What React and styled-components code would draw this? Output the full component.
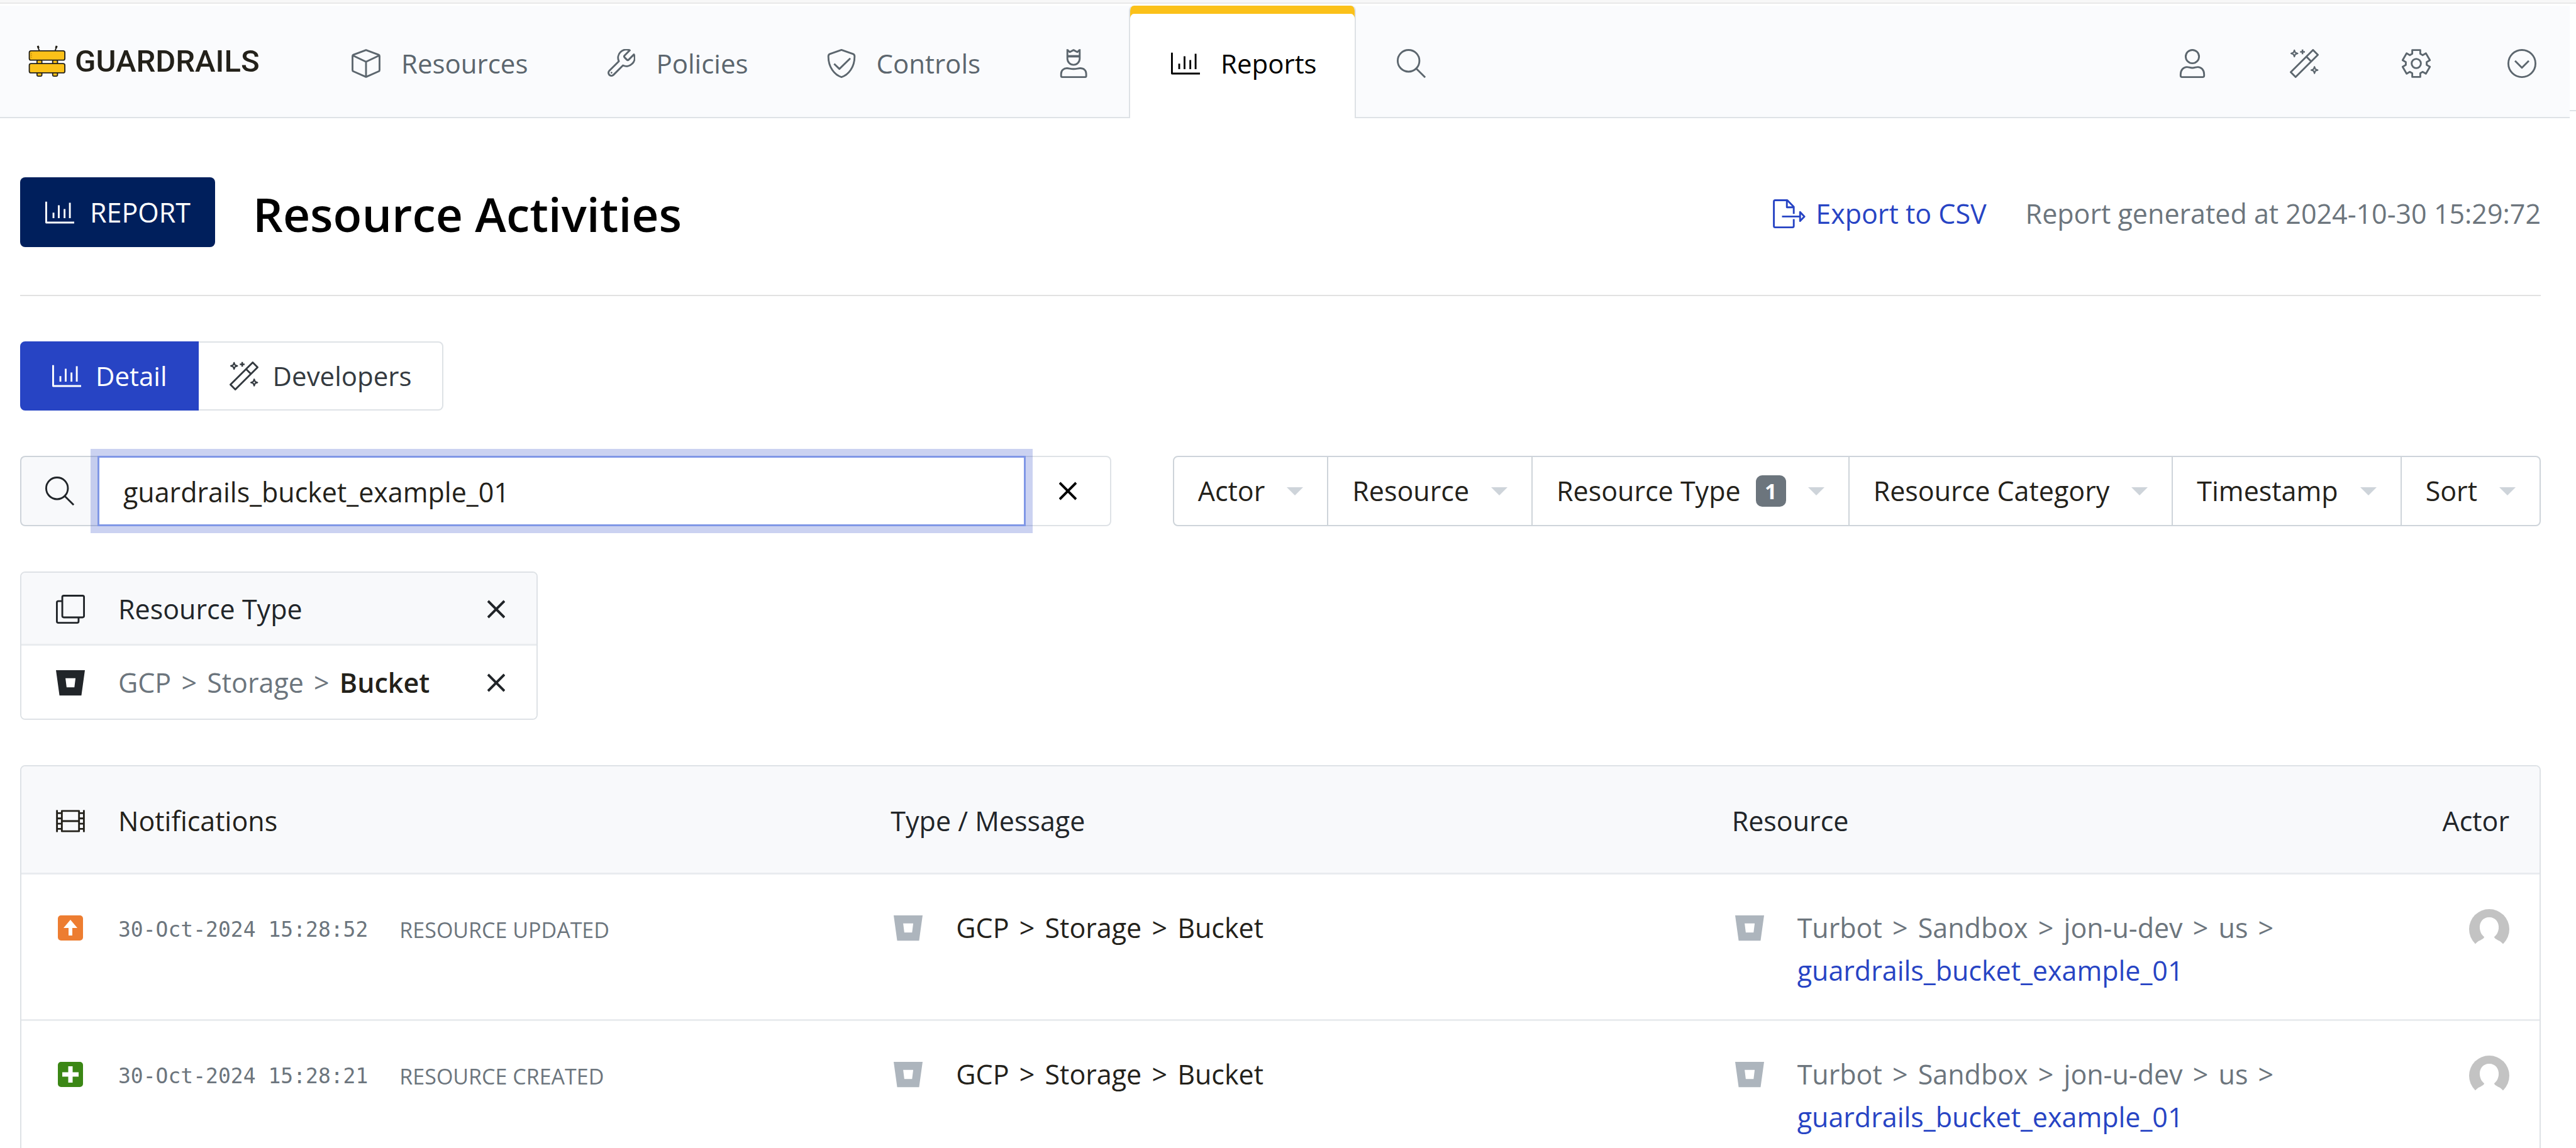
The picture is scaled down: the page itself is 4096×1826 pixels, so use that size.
import React, { useState } from "react";
import styled, { createGlobalStyle } from "styled-components";

const color = {
  ink: "#212529",
  dark: "#23211a",
  muted: "#6c757d",
  nav: "#5c666e",
  line: "#dee2e6",
  control: "#ced4da",
  panel: "#f8f9fb",
  blue: "#2744c4",
  navy: "#001f5c",
  yellow: "#fbc119",
};

const GlobalStyle = createGlobalStyle`
  *, *::before, *::after { box-sizing: border-box; }
  body {
    margin: 0;
    background: #fff;
    color: ${color.ink};
    font-family: "Open Sans", "Noto Sans", sans-serif;
    font-size: 43px;
    line-height: 68px;
  }
  button, input { font: inherit; color: inherit; margin: 0; }
  button { background: none; border: 0; padding: 0; cursor: pointer; white-space: nowrap; }
  a { color: inherit; text-decoration: none; }
  h1, p, ul { margin: 0; padding: 0; }
`;

/* ---------- icons ---------- */

const IconBox = styled.span`
  flex: none;
  display: inline-flex;
  align-items: center;
  justify-content: center;
  width: 56px;
  height: 68px;
`;

const Line = styled.svg`
  display: block;
  width: ${(p) => p.$w || 46}px;
  height: 46px;
  fill: none;
  stroke: currentColor;
  stroke-width: ${(p) => p.$stroke ?? 32};
  stroke-linejoin: round;
`;

const Glyph = ({ children, box = "0 0 512 512", ...rest }) => (
  <Line viewBox={box} aria-hidden="true" {...rest}>
    {children}
  </Line>
);

const CubeIcon = () => (
  <Glyph>
    <path d="M256 18 480 102Q495 108 495 126V372Q495 388 480 395L256 494 32 395Q17 388 17 372V126Q17 108 32 102ZM22 114 256 226 490 114M256 226V494" />
  </Glyph>
);
const WrenchIcon = () => (
  <Glyph box="1.4 1.6 21 21" $stroke={1.35}>
    <path d="M14.7 6.3a1 1 0 0 0 0 1.4l1.6 1.6a1 1 0 0 0 1.4 0l3.77-3.77a6 6 0 0 1-7.94 7.94l-6.91 6.91a2.12 2.12 0 0 1-3-3l6.91-6.91a6 6 0 0 1 7.94-7.94l-3.76 3.76z" />
    <circle cx="5.2" cy="18.8" r=".35" fill="currentColor" strokeWidth=".6" />
  </Glyph>
);
const ShieldIcon = () => (
  <Glyph>
    <path d="M256 16 462 88Q488 98 488 130C488 320 380 460 256 496C132 460 24 320 24 130Q24 98 50 88ZM126 262 219 352 412 164" />
  </Glyph>
);
const RulerIcon = () => (
  <Glyph>
    <path d="M147 4V170A109 109 0 0 0 365 170V4M147 16 190 54 256 18 322 54 365 16" />
    <path d="M147 128H365" strokeWidth="42" />
    <path d="M36 440C36 380 80 340 140 340C180 340 200 354 256 354C312 354 332 340 372 340C440 340 480 380 480 440V476Q480 496 460 496H56Q36 496 36 476Z" />
  </Glyph>
);
const ChartIcon = () => (
  <Glyph>
    <path d="M16 64V434H512M145 258V356M239 128V356M341 194V356M435 84V356" />
  </Glyph>
);
const SearchIcon = () => (
  <Glyph>
    <circle cx="208" cy="208" r="192" />
    <path d="M344 344 502 502" />
  </Glyph>
);
const UserIcon = () => (
  <Glyph>
    <circle cx="256" cy="134" r="118" />
    <path d="M48 448C48 370 100 318 160 318C190 318 215 334 256 334C297 334 322 318 352 318C412 318 464 370 464 448V470Q464 496 438 496H74Q48 496 48 470Z" />
  </Glyph>
);
const WandIcon = () => (
  <Glyph>
    <path d="M410 16 496 102 102 496 16 410ZM292 134 378 220" />
    <path strokeWidth="24" d="M80 20 96 62 138 78 96 94 80 136 64 94 22 78 64 62ZM436 314 452 356 494 372 452 388 436 430 420 388 378 372 420 356Z" />
    <path strokeWidth="28" d="M224 8V92M182 50H266" />
  </Glyph>
);

const gearPoints = Array.from({ length: 6 }, (_, tooth) =>
  [[-71, -172], [-71, -238], [71, -238], [71, -172]].map(([x, y]) => {
    const a = (tooth * Math.PI) / 3;
    const px = 256 + x * Math.cos(a) - y * Math.sin(a);
    const py = 256 + x * Math.sin(a) + y * Math.cos(a);
    return `${px.toFixed(1)},${py.toFixed(1)}`;
  }).join(" ")
).join(" ");

const GearIcon = () => (
  <Glyph>
    <polygon points={gearPoints} />
    <circle cx="256" cy="256" r="82" />
  </Glyph>
);
const DownCircleIcon = () => (
  <Glyph>
    <circle cx="256" cy="256" r="240" />
    <path d="M134 208 256 330 378 208" />
  </Glyph>
);
const ExportIcon = () => (
  <Glyph box="0 0 576 512" $w={52}>
    <path d="M368 260V134L254 16H40Q16 16 16 40V472Q16 496 40 496H344Q368 496 368 472V350M246 16V142H368M160 305H470M480 225 556 305 480 385Z" />
  </Glyph>
);
const CloneIcon = () => (
  <Glyph>
    <rect x="112" y="16" width="384" height="384" rx="26" />
    <path d="M112 112H42Q16 112 16 138V470Q16 496 42 496H374Q400 496 400 470V400" />
  </Glyph>
);
const FilmIcon = () => (
  <Glyph>
    <path d="M104 76H408V436H104ZM104 256H408M18 60V452M494 60V452M18 116H104M18 208H104M18 302H104M18 394H104M408 116H494M408 208H494M408 302H494M408 394H494" />
  </Glyph>
);
const BucketIcon = () => (
  <Glyph $stroke={0}>
    <path fill="currentColor" fillRule="evenodd" d="M0 32H512L450 480H62ZM168 176 188 336H326L346 176Z" />
  </Glyph>
);
const CloseIcon = () => (
  <Line viewBox="0 0 28 46" $w={28} $stroke={4} aria-hidden="true">
    <path d="M1 10 27 36M27 10 1 36" />
  </Line>
);
const UpdatedIcon = () => (
  <Line viewBox="0 0 46 46" $stroke={6} aria-hidden="true">
    <rect x="3" y="3" width="40" height="40" rx="5" fill="#ed7d31" stroke="none" />
    <path d="M23 17V35" stroke="#fff" />
    <path d="M23 10 34 23H12Z" fill="#fff" stroke="none" />
  </Line>
);
const CreatedIcon = () => (
  <Line viewBox="0 0 46 46" $stroke={7} aria-hidden="true">
    <rect x="3" y="3" width="40" height="40" rx="5" fill="#3b8715" stroke="none" />
    <path d="M23 10V36M10 23H36" stroke="#fff" />
  </Line>
);

const AvatarSvg = styled.svg`
  display: block;
  width: 64px;
  height: 68px;
  margin-left: auto;
`;
const Avatar = () => (
  <AvatarSvg viewBox="0 0 64 68" role="img" aria-label="Actor">
    <circle cx="32" cy="32" r="32" fill="#c3c3c3" />
    <path
      fill="#fff"
      d="M32 13C22 13 16 21 17 31C18 38 21 42 24 44C24 49 11 50 9 58V68H55V58C53 50 40 49 40 44C43 42 46 38 47 31C48 21 42 13 32 13Z"
    />
  </AvatarSvg>
);

const LogoMark = styled.svg`
  display: block;
  width: 60px;
  height: 51px;
`;
const Logo = () => (
  <LogoMark viewBox="25 52 193 166" aria-hidden="true">
    <g stroke={color.dark} strokeWidth="6">
      <path fill="none" d="M73 55 76 68 81 80M170 55 167 68 163 80" />
      <path fill="none" strokeWidth="10" d="M73 55 77 67M171 55 167 67" />
      <rect x="69" y="128" width="25" height="84" rx="5" fill={color.yellow} />
      <rect x="150" y="128" width="25" height="84" rx="5" fill={color.yellow} />
      <rect x="29" y="81" width="184" height="48" rx="9" fill={color.yellow} />
      <rect x="29" y="147" width="184" height="48" rx="9" fill={color.yellow} />
    </g>
    <path d="M40 92V118" stroke="#b98a10" strokeWidth="4" strokeDasharray="6 4" />
  </LogoMark>
);

/* ---------- top bar ---------- */

const Shell = styled.div`
  display: flex;
  flex-direction: column;
  height: 100vh;
  overflow: hidden;
`;
const WindowEdge = styled.div`
  flex: none;
  height: 9px;
  background: #fff;
  border-top: 4px solid #f7f7f7;
  box-shadow: inset 0 2px #e8e8e8;
`;
const TopRow = styled.div`
  flex: none;
  display: flex;
`;
const NavBar = styled.header`
  flex: 1;
  display: flex;
  height: 179px;
  background: #fafbfd;
  box-shadow: inset 0 -2px ${color.line};
`;
const BarEnd = styled.div`
  width: 10px;
  height: 168px;
  border-bottom: 2px solid ${color.line};
`;
const Brand = styled.a`
  flex: none;
  display: flex;
  align-items: center;
  gap: 14px;
  width: 494px;
  padding: 0 0 2px 45px;
  font: 500 49px/68px Roboto, sans-serif;
  color: ${color.dark};
`;
const NavGroup = styled.nav`
  display: flex;
  gap: ${(p) => (p.$end ? 2 : 0)}px;
  margin-left: ${(p) => (p.$end ? "auto" : "0")};
  font-size: 42px;
`;
const NavLink = styled.a`
  display: flex;
  align-items: center;
  gap: 28px;
  padding: 4px 60px 0 60px;
  color: ${(p) => (p.$active ? "#000" : color.nav)};
  background: ${(p) => (p.$active ? "#fff" : "none")};
  border: solid ${color.line};
  border-width: ${(p) => (p.$active ? "0 2px" : "0")};
  border-radius: 8px 8px 0 0;
  box-shadow: ${(p) => (p.$active ? `inset 0 13px ${color.yellow}` : "none")};
`;
const MenuButton = styled.button`
  display: flex;
  align-items: center;
  padding: 4px 48px 0 50px;
  color: ${color.nav};
`;

/* ---------- page ---------- */

const Main = styled.main`
  flex: 1;
  display: flex;
  flex-direction: column;
  gap: 72px;
  padding: 94px 56px 0 32px;
  overflow-y: auto;
  scrollbar-width: none;
`;
const PageHeader = styled.div`
  flex: none;
  display: flex;
  align-items: center;
  padding-bottom: 76px;
  border-bottom: 2px solid #e2e2e2;
`;
const ReportTag = styled.span`
  display: flex;
  align-items: center;
  gap: 20px;
  height: 111px;
  padding: 0 39px 0 35px;
  border-radius: 8px;
  background: ${color.navy};
  color: #fff;
`;
const Title = styled.h1`
  margin-left: 60px;
  padding-top: 4px;
  font-size: 75px;
  font-weight: 600;
  line-height: 104px;
  color: #000;
`;
const HeaderMeta = styled.div`
  display: flex;
  align-items: center;
  gap: 62px;
  margin-left: auto;
  padding-top: 4px;
  color: ${color.muted};
`;
const ExportLink = styled.a`
  display: flex;
  align-items: center;
  gap: 14px;
  color: ${color.blue};
`;
const TabGroup = styled.div`
  flex: none;
  display: flex;
`;
const TabButton = styled.button`
  display: flex;
  align-items: center;
  gap: 18px;
  height: 110px;
  padding: 0 48px 0 44px;
  border: 2px solid ${(p) => (p.$active ? color.blue : color.line)};
  background: ${(p) => (p.$active ? color.blue : "#fff")};
  color: ${(p) => (p.$active ? "#fff" : "#343a40")};
  font-size: 42px;
  &:first-child { border-radius: 8px 0 0 8px; }
  &:last-child { border-radius: 0 8px 8px 0; border-left: 0; padding-left: 44px; }
`;
const Toolbar = styled.div`
  flex: none;
  display: flex;
  justify-content: space-between;
  gap: 98px;
`;
const SearchGroup = styled.div`
  flex: 1;
  display: flex;
  height: 112px;
`;
const SearchLabel = styled.label`
  display: flex;
  align-items: center;
  padding: 0 32px 0 33px;
  border: 2px solid ${color.control};
  border-right: 0;
  border-radius: 8px 0 0 8px;
  background: ${color.panel};
`;
const SearchInput = styled.input`
  flex: 1;
  min-width: 0;
  position: relative;
  z-index: 1;
  padding: 4px 38px 0;
  border: 3px solid #8097e6;
  border-radius: 0;
  background: #fff;
  color: ${color.dark};
  outline: 0;
  box-shadow: 0 0 0 11px rgba(39, 68, 196, 0.24);
`;
const ClearButton = styled.button`
  display: flex;
  align-items: center;
  justify-content: center;
  width: 136px;
  border: 2px solid ${color.line};
  border-left: 0;
  border-radius: 0 8px 8px 0;
  color: #000;
`;
const FilterGroup = styled.div`
  display: flex;
  height: 112px;
`;
const FilterButton = styled.button`
  display: flex;
  align-items: center;
  gap: 35px;
  padding: 0 38px;
  border: solid ${color.control};
  border-width: 2px 2px 2px 0;
  color: ${color.dark};
  &:first-child { border-left-width: 2px; border-radius: 8px 0 0 8px; }
  &:last-child { border-radius: 0 8px 8px 0; }
`;
const FilterText = styled.span`
  display: flex;
  align-items: center;
  gap: 24px;
`;
const Count = styled.span`
  width: 48px;
  border-radius: 10px;
  background: ${color.muted};
  color: #fff;
  font-size: 34px;
  font-weight: 700;
  line-height: 50px;
  text-align: center;
`;
const Caret = styled.span`
  border: solid transparent;
  border-width: 13px 13px 0;
  border-top-color: ${color.control};
`;
const FilterCard = styled.ul`
  flex: none;
  width: 823px;
  border: 2px solid ${color.line};
  border-radius: 8px;
  list-style: none;
  overflow: hidden;
`;
const FilterRow = styled.li`
  display: flex;
  align-items: center;
  gap: 48px;
  height: 116px;
  padding: 2px 50px 0;
  background: ${(p) => (p.$head ? color.panel : "#fff")};
  border-bottom: ${(p) => (p.$head ? `3px solid #e9ecef` : "0")};
`;
const RemoveButton = styled.button`
  margin-left: auto;
`;
const Trail = styled.span`
  color: ${color.muted};
`;
const Separator = styled.span`
  margin: 0 5px;
`;
const Strong = styled.strong`
  font-weight: 600;
  color: ${color.dark};
`;

const TableFrame = styled.div`
  flex: none;
  border: 2px solid ${color.line};
  border-radius: 8px 8px 0 0;
  overflow: hidden;
`;
const Table = styled.table`
  width: 100%;
  table-layout: fixed;
  border-collapse: separate;
  border-spacing: 0;
`;
const Column = styled.col`
  width: ${(p) => p.$width};
`;
const HeadCell = styled.th`
  height: 172px;
  padding: 4px 48px 0 37px;
  background: ${color.panel};
  border-bottom: 3px solid #e9ecef;
  font-weight: 400;
  text-align: ${(p) => (p.$end ? "right" : "left")};
  &:first-child { padding-left: 50px; }
`;
const Cell = styled.td`
  height: 233px;
  padding: 51px 48px 0 37px;
  border-bottom: 3px solid #e9ecef;
  vertical-align: top;
  &:first-child { padding-left: 50px; }
`;
const Entry = styled.div`
  display: flex;
  align-items: flex-start;
  gap: 48px;
  color: ${(p) => (p.$muted ? color.muted : color.dark)};
`;
const IconTone = styled.span`
  color: #adb5bd;
`;
const Event = styled.div`
  display: flex;
  gap: 50px;
  line-height: 74px;
  color: ${color.muted};
`;
const Time = styled.time`
  font-family: "DejaVu Sans Mono", monospace;
  font-size: 33px;
`;
const EventName = styled.span`
  font-size: 34px;
`;
const ResourceLink = styled.a`
  display: block;
  color: ${color.blue};
`;
const AvatarSlot = styled.div`
  padding-top: 4px;
`;

const navItems = [
  { label: "Resources", Icon: CubeIcon },
  { label: "Policies", Icon: WrenchIcon },
  { label: "Controls", Icon: ShieldIcon },
  { name: "Administration", Icon: RulerIcon },
  { label: "Reports", Icon: ChartIcon, active: true },
  { name: "Search", Icon: SearchIcon },
];
const accountItems = [
  { name: "Profile", Icon: UserIcon },
  { name: "Developers", Icon: WandIcon },
  { name: "Settings", Icon: GearIcon },
];
const filters = [
  { label: "Actor" },
  { label: "Resource" },
  { label: "Resource Type", count: 1 },
  { label: "Resource Category" },
  { label: "Timestamp" },
  { label: "Sort" },
];
const resourcePath = ["Turbot", "Sandbox", "jon-u-dev", "us"];
const activities = [
  { time: "30-Oct-2024 15:28:52", event: "RESOURCE UPDATED", Icon: UpdatedIcon },
  { time: "30-Oct-2024 15:28:21", event: "RESOURCE CREATED", Icon: CreatedIcon },
];

const Path = ({ parts }) =>
  parts.map((part) => (
    <React.Fragment key={part}>
      {part} <Separator>&gt;</Separator>{" "}
    </React.Fragment>
  ));

const BucketEntry = ({ children, muted }) => (
  <Entry $muted={muted}>
    <IconTone>
      <IconBox>
        <BucketIcon />
      </IconBox>
    </IconTone>
    <div>{children}</div>
  </Entry>
);

export default function App() {
  const [query, setQuery] = useState("guardrails_bucket_example_01");
  return (
    <Shell>
      <GlobalStyle />
      <WindowEdge />
      <TopRow>
        <NavBar>
          <Brand href="#home">
            <Logo />
            GUARDRAILS
          </Brand>
          <NavGroup aria-label="Main">
            {navItems.map(({ label, name, Icon, active }) => (
              <NavLink key={label || name} href={`#${label || name}`} $active={active} aria-label={name}>
                <IconBox><Icon /></IconBox>
                {label}
              </NavLink>
            ))}
          </NavGroup>
          <NavGroup $end aria-label="Account">
            {accountItems.map(({ name, Icon }) => (
              <NavLink key={name} href={`#${name}`} aria-label={name}>
                <IconBox><Icon /></IconBox>
              </NavLink>
            ))}
            <MenuButton type="button" aria-label="More">
              <IconBox><DownCircleIcon /></IconBox>
            </MenuButton>
          </NavGroup>
        </NavBar>
        <BarEnd />
      </TopRow>

      <Main>
        <PageHeader>
          <ReportTag>
            <IconBox><ChartIcon /></IconBox>
            REPORT
          </ReportTag>
          <Title>Resource Activities</Title>
          <HeaderMeta>
            <ExportLink href="#export">
              <IconBox><ExportIcon /></IconBox>
              Export to CSV
            </ExportLink>
            <p>Report generated at 2024-10-30 15:29:72</p>
          </HeaderMeta>
        </PageHeader>

        <TabGroup>
          <TabButton type="button" $active aria-pressed="true">
            <IconBox><ChartIcon /></IconBox>
            Detail
          </TabButton>
          <TabButton type="button" aria-pressed="false">
            <IconBox><WandIcon /></IconBox>
            Developers
          </TabButton>
        </TabGroup>

        <Toolbar>
          <SearchGroup>
            <SearchLabel htmlFor="query" aria-label="Search activities">
              <IconBox><SearchIcon /></IconBox>
            </SearchLabel>
            <SearchInput id="query" type="text" value={query} onChange={(e) => setQuery(e.target.value)} />
            <ClearButton type="button" aria-label="Clear search" onClick={() => setQuery("")}>
              <CloseIcon />
            </ClearButton>
          </SearchGroup>
          <FilterGroup>
            {filters.map(({ label, count }) => (
              <FilterButton key={label} type="button" aria-haspopup="menu">
                <FilterText>
                  {label}
                  {count && <Count>{count}</Count>}
                </FilterText>
                <Caret />
              </FilterButton>
            ))}
          </FilterGroup>
        </Toolbar>

        <FilterCard>
          <FilterRow $head>
            <IconBox><CloneIcon /></IconBox>
            Resource Type
            <RemoveButton type="button" aria-label="Remove Resource Type filter">
              <CloseIcon />
            </RemoveButton>
          </FilterRow>
          <FilterRow>
            <IconBox><BucketIcon /></IconBox>
            <Trail>
              <Path parts={["GCP", "Storage"]} />
              <Strong>Bucket</Strong>
            </Trail>
            <RemoveButton type="button" aria-label="Remove Bucket">
              <CloseIcon />
            </RemoveButton>
          </FilterRow>
        </FilterCard>

        <TableFrame>
          <Table>
            <colgroup>
              <Column $width="33.6%" />
              <Column $width="33.4%" />
              <Column $width="25%" />
              <Column $width="8%" />
            </colgroup>
            <thead>
              <tr>
                <HeadCell scope="col">
                  <Entry>
                    <IconBox><FilmIcon /></IconBox>
                    Notifications
                  </Entry>
                </HeadCell>
                <HeadCell scope="col">Type / Message</HeadCell>
                <HeadCell scope="col">Resource</HeadCell>
                <HeadCell scope="col" $end>Actor</HeadCell>
              </tr>
            </thead>
            <tbody>
              {activities.map(({ time, event, Icon }) => (
                <tr key={time}>
                  <Cell>
                    <Entry>
                      <IconBox><Icon /></IconBox>
                      <Event>
                        <Time>{time}</Time>
                        <EventName>{event}</EventName>
                      </Event>
                    </Entry>
                  </Cell>
                  <Cell>
                    <BucketEntry>
                      <Path parts={["GCP", "Storage"]} />
                      Bucket
                    </BucketEntry>
                  </Cell>
                  <Cell>
                    <BucketEntry muted>
                      <Path parts={resourcePath} />
                      <ResourceLink href="#resource">guardrails_bucket_example_01</ResourceLink>
                    </BucketEntry>
                  </Cell>
                  <Cell>
                    <AvatarSlot>
                      <Avatar />
                    </AvatarSlot>
                  </Cell>
                </tr>
              ))}
            </tbody>
          </Table>
        </TableFrame>
      </Main>
    </Shell>
  );
}
